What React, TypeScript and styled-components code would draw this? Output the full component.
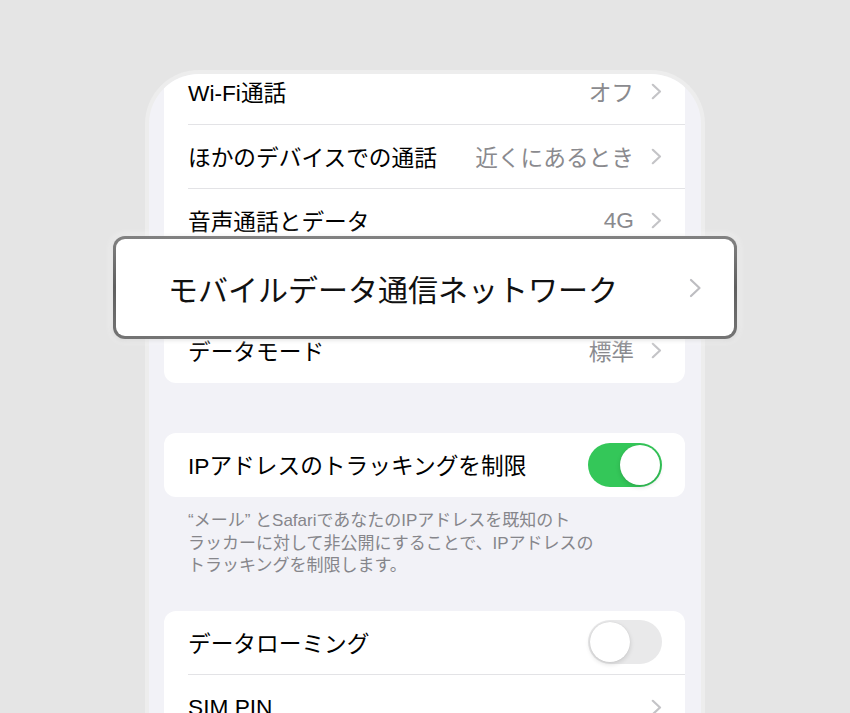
import React from "react";
import styled, { createGlobalStyle } from "styled-components";

const Global = createGlobalStyle`
  html, body { margin: 0; padding: 0; background: #e5e5e5; }
  * { box-sizing: border-box; }
  body { font-family: "Liberation Sans", "Noto Sans CJK JP", sans-serif; }
`;

const Stage = styled.div`
  position: relative;
  width: 850px;
  height: 713px;
  overflow: hidden;
  background: #e5e5e5;
  padding: 70px 0 0 145px;
`;

const Phone = styled.div`
  width: 560px;
  height: 700px;
  border: 4px solid #ededed;
  border-bottom: none;
  border-radius: 54px 54px 0 0;
  background: #f2f2f7;
  overflow: hidden;
  padding: 0 16px 0 15px;
`;

const Card = styled.div<{ $top: number }>`
  background: #ffffff;
  border-radius: 12px;
  margin-top: ${(p) => p.$top}px;
  overflow: hidden;
`;

const Row = styled.div`
  display: flex;
  height: 64.5px;
  padding-left: 24px;
`;

const RowBody = styled.div<{ $sep: boolean }>`
  flex: 1;
  display: flex;
  align-items: center;
  padding-right: 23px;
  border-bottom: ${(p) => (p.$sep ? "1px solid #e3e3e6" : "none")};
`;

const Label = styled.span`
  flex: 1;
  font-size: 22.7px;
  color: #000;
  white-space: nowrap;
`;

const Value = styled.span`
  font-size: 22.7px;
  color: #8a8a8e;
  margin-right: 17px;
  white-space: nowrap;
`;

const Footer = styled.div`
  padding: 13px 24px 0;
  font-size: 17px;
  line-height: 22.5px;
  color: #86868b;
`;

const Toggle = styled.div<{ $on: boolean }>`
  width: 74px;
  height: 44px;
  border-radius: 22px;
  background: ${(p) => (p.$on ? "#34c759" : "#e9e9ea")};
  padding: 2px;
  display: flex;
  justify-content: ${(p) => (p.$on ? "flex-end" : "flex-start")};
`;

const Knob = styled.div`
  width: 40px;
  height: 40px;
  border-radius: 50%;
  background: #fff;
  box-shadow: 0 2px 5px rgba(0, 0, 0, 0.14), 0 0 1px rgba(0, 0, 0, 0.12);
`;

const Lens = styled.div`
  position: absolute;
  left: 113px;
  top: 236px;
  width: 624px;
  height: 103px;
  border-radius: 12px;
  padding: 3px;
  background: linear-gradient(180deg, #828282 0%, #5f5f5f 50%, #747474 100%);
  box-shadow: 0 0 8px rgba(255, 255, 255, 0.9), 0 1px 4px rgba(0, 0, 0, 0.18);
`;

const LensInner = styled.div`
  height: 100%;
  border-radius: 9px;
  background: #fff;
  display: flex;
  align-items: center;
  padding: 0 32px 0 52px;
`;

const LensLabel = styled.span`
  flex: 1;
  font-size: 30px;
  color: #111;
  white-space: nowrap;
`;

const Chevron = ({ big }: { big?: boolean }) =>
  big ? (
    <svg width="13" height="20" viewBox="0 0 13 20">
      <path d="M2 2 L10.5 10 L2 18" fill="none" stroke="#bdbdc1" strokeWidth="2.2" strokeLinecap="round" strokeLinejoin="round" />
    </svg>
  ) : (
    <svg width="11" height="17" viewBox="0 0 11 17">
      <path d="M1.8 1.8 L9 8.5 L1.8 15.2" fill="none" stroke="#c4c4c7" strokeWidth="2.2" strokeLinecap="round" strokeLinejoin="round" />
    </svg>
  );

type Item = { label: string; value?: string; chevron?: boolean; toggle?: boolean; on?: boolean };

const Group = ({ items, top }: { items: Item[]; top: number }) => (
  <Card $top={top}>
    {items.map((it, i) => (
      <Row key={i}>
        <RowBody $sep={i < items.length - 1}>
          <Label>{it.label}</Label>
          {it.value && <Value>{it.value}</Value>}
          {it.chevron && <Chevron />}
          {it.toggle && (
            <Toggle $on={!!it.on}>
              <Knob />
            </Toggle>
          )}
        </RowBody>
      </Row>
    ))}
  </Card>
);

export default function App() {
  return (
    <>
      <Global />
      <Stage>
        <Phone>
          <Group
            top={-14}
            items={[
              { label: "Wi-Fi通話", value: "オフ", chevron: true },
              { label: "ほかのデバイスでの通話", value: "近くにあるとき", chevron: true },
              { label: "音声通話とデータ", value: "4G", chevron: true },
              { label: "モバイルデータ通信ネットワーク", chevron: true },
              { label: "データモード", value: "標準", chevron: true },
            ]}
          />
          <Group top={50} items={[{ label: "IPアドレスのトラッキングを制限", toggle: true, on: true }]} />
          <Footer>
            “メール” とSafariであなたのIPアドレスを既知のト
            <br />
            ラッカーに対して非公開にすることで、IPアドレスの
            <br />
            トラッキングを制限します。
          </Footer>
          <Group
            top={33}
            items={[
              { label: "データローミング", toggle: true, on: false },
              { label: "SIM PIN", chevron: true },
            ]}
          />
        </Phone>
        <Lens>
          <LensInner>
            <LensLabel>モバイルデータ通信ネットワーク</LensLabel>
            <Chevron big />
          </LensInner>
        </Lens>
      </Stage>
    </>
  );
}
